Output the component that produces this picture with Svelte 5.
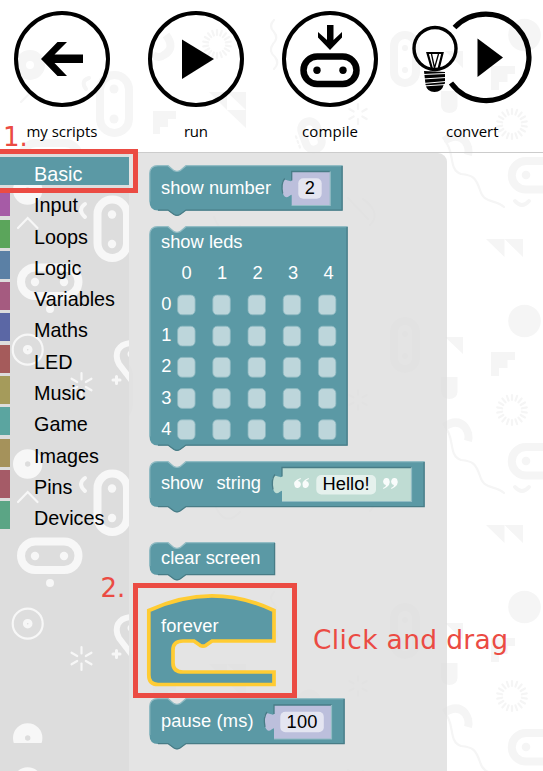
<script>
  const categories = [
    ['Basic', '#5b99a5'], ['Input', '#a65ba6'], ['Loops', '#5ba55b'], ['Logic', '#5b80a5'],
    ['Variables', '#a55b80'], ['Maths', '#5b67a5'], ['LED', '#a55b5b'], ['Music', '#a59b5b'],
    ['Game', '#5ba5a0'], ['Images', '#a5925b'], ['Pins', '#a55b67'], ['Devices', '#5ba585']
  ];

  // Outline of a statement block with a notch above and a tab below.
  const block = (w, h) =>
    `M.5 9Q.5 .5 9 .5H19L25 5.5Q28 7 31 5.5L37 .5H${w}V${h}H37L31 ${h + 4.3}Q28 ${h + 6} 25 ${h + 4.3}L19 ${h}H9Q.5 ${h} .5 ${h - 9}Z`;
  const light = (w, h) => `M.7 ${h - 9}V9Q.7 .7 9 .7H19L25 5.7Q28 7.2 31 5.7L37 .7H${w}`;
  const dark = (w, h) => `M${w - .4} 1V${h - .4}H37L31 ${h + 4}Q28 ${h + 5.7} 25 ${h + 4}L19 ${h - .4}H9`;

  // Outline of a value block, whose puzzle tab sits left of x.
  const value = (x, y, w, h) =>
    `M${x} ${y}H${x + w}V${y + h}H${x}V${y + 24}C${x} ${y + 21} ${x - 4} ${y + 28} ${x - 7} ${y + 25}Q${x - 10} ${y + 22} ${x - 9.7} ${y + 14}C${x - 9.5} ${y + 3} ${x - 2} ${y + 12} ${x} ${y + 9}Z`;

  const rays = (n) => Array.from({ length: n }, (_, i) => (i * 360) / n);
  const five = [0, 1, 2, 3, 4];
</script>

{#snippet frame(w, h)}
  <path class="fill" d={block(w, h)} />
  <path class="light" d={light(w, h)} />
  <path class="dark" d={dark(w, h)} />
{/snippet}

{#snippet socket(x, y, w, h, color)}
  <path d={value(x, y, w, h)} fill={color} />
  <path class="dark" d="M{x} {y + 9}V{y}H{x + w}" />
  <path class="rim" d="M{x} {y + h}H{x + w}V{y}" />
  <path class="dark" d="M{x - 7} {y + 7}Q{x - 11} {y + 12} {x - 9} {y + 22}" />
{/snippet}

{#snippet backdrop()}
  <g id="tile">
    <path class="line wide" d="M560 161H526A14 14 0 0 0 526 189.500H560" />
    <circle cx="526" cy="175" r="4.300" />
    <path class="line" d="M515 201Q522 209 529 201" />
    <path class="line thin" d="M445 141C455 151 448 170 461 174C473 175 476 178 480 190C484 204 495 199 504 207" />
    <path d="M486 239H504.500V257ZM504.500 239H523V257ZM445 337H463V354ZM491 352H515V360H507.500V368H499V376H491Z" />
    <circle cx="524.500" cy="321" r="16.300" />
    <path d="M441 377H457.500V392Q457 399 449 399Q441 398 441 391Z" />
    <path class="line wide" d="M444 427Q457 418 465 427Q470 434 468 441" />
    {#each rays(18) as r}
      <path class="line thin" d="M512 395V400" transform="rotate({r} 512 410)" />
    {/each}
    <rect class="line wide" x="394" y="321" width="22" height="48" rx="11" />
    <circle cx="405" cy="334" r="3" /><circle cx="405" cy="356" r="3" />
    {#each rays(6) as r}
      <path class="line thin" d="M358 390V395" transform="rotate({r} 358 400)" />
    {/each}
    <g transform="rotate(-20 311 420)">
      <rect class="line wide" x="303" y="407" width="16" height="29" rx="8" />
      <path class="line thin" d="M296 417V430" stroke-dasharray="2 3" />
    </g>
    <path class="line thin" d="M274 306Q268 312 274 318Q279 324 273 330Q268 337 275 343Q280 349 274 355" />
    <path class="line wide" d="M166 321Q176 334 164 341Q159 345 153 341" />
    {#each rays(18) as r}
      <path class="line thin" d="M217 316V321" transform="rotate({r} 217 330)" />
    {/each}
    <path fill-rule="evenodd" d="M15 351A15 15 0 1 0 45 351A15 15 0 1 0 15 351M26 351A4 4 0 1 1 34 351A4 4 0 1 1 26 351" />
    <path class="line thin" d="M21 388L28 381" />
    <path class="line" d="M89 364Q80 367 86 375" />
    <rect class="line wide" x="100" y="361" width="29" height="58" rx="14.500" />
    <circle cx="114" cy="375" r="4.500" /><circle cx="114" cy="405" r="4.500" />
    <path d="M153 397H176V405H168V413H160V420H153ZM209 378H246V414L227 396H246L227 378V396Z" />
    <rect class="line wide" x="22" y="429" width="57" height="28" rx="14" />
    <path class="line thin" d="M214 503Q224 529 240 512M348 484L368 505M363 485Q382 499 370 511" />
  </g>
{/snippet}

<div class="page">
  <svg class="backdrop" width="543" height="771" viewBox="0 0 543 771">
    {@render backdrop()}
    <use href="#tile" y="-286" />
    <use href="#tile" y="286" />
    <use href="#tile" y="572" />
  </svg>

  <header>
    <svg width="124" height="152" viewBox="0 0 124 152">
      <circle class="ring" cx="62" cy="59" r="46" />
      <path d="M41 59L57.500 42H67L54.500 54.500H83V63H54.500L67 76H57.500Z" />
      <text x="26.500" y="136.500" textLength="71">my scripts</text>
    </svg>
    <svg width="144" height="152" viewBox="124 0 144 152">
      <circle class="ring" cx="196" cy="59" r="46" />
      <path d="M182 39.500L214 59L182 79Z" />
      <text x="184" y="136.500" textLength="24">run</text>
    </svg>
    <svg width="124" height="152" viewBox="268 0 124 152">
      <circle class="ring" cx="330" cy="59" r="46" />
      <path d="M327 25H333.500V40L342 32V37.500L330 50L318 37.500V32L327 40Z" />
      <rect class="bit" x="303.500" y="56.500" width="53" height="27.500" rx="13.750" />
      <circle cx="317" cy="70.300" r="3.700" /><circle cx="343" cy="70.300" r="3.700" />
      <text x="302" y="136.500" textLength="56">compile</text>
    </svg>
    <svg width="151" height="152" viewBox="392 0 151 152">
      <path class="arc" d="M454.500 27.500A43.200 43.200 0 1 1 451 83" />
      <path d="M477.500 38.500L503 57.500L477.500 77Z" />
      <circle class="bulb" cx="435" cy="48.500" r="21" />
      <path class="filament" d="M432 69L427.500 53H442.500L438.500 69" />
      <path class="filament slim" d="M431.500 54L434.500 68L438.500 54" />
      <path d="M424 71L445 72V83.500L444 84Q442 92 434.500 92Q427 92 425.500 84.500Z" />
      <path class="thread" d="M423 74.500L446 73.500M423 79L446 77.500M423 83.500L446 81.500M423 86L446 84.500" />
      <text x="446" y="136.500" textLength="52.500">convert</text>
    </svg>
  </header>

  <main>
    <nav>
      <svg class="doodles" width="129" height="618" viewBox="0 153 129 618">
        <clipPath id="upper"><rect x="0" y="153" width="129" height="590" /></clipPath>
        <clipPath id="lower"><rect x="0" y="743" width="129" height="28" /></clipPath>
        {#each [-274, 0, 274, 548, 592] as dy}
          <g clip-path={dy === 592 ? 'url(#lower)' : 'url(#upper)'}>
            <g transform="translate(0 {dy})">
              <path fill-rule="evenodd" d="M13 190A14.700 14.700 0 1 0 42.400 190A14.700 14.700 0 1 0 13 190M25 190A2.700 2.700 0 1 1 30.400 190A2.700 2.700 0 1 1 25 190" />
              <path class="line thin" d="M18 228L27.700 218L37.500 228" />
              <path class="line" d="M85 204Q77 210 85 217" />
              <rect class="line wide" x="97.500" y="199.500" width="29.500" height="58.500" rx="14.750" />
              <circle cx="112" cy="214.500" r="4.200" /><circle cx="112" cy="244" r="4.200" />
              <rect class="line wide" x="21" y="267.500" width="57.500" height="28.500" rx="14.250" />
              <circle cx="35" cy="282" r="4.200" /><circle cx="64" cy="282" r="4.200" />
              <circle cx="50" cy="309" r="4" />
              <circle class="line thin" cx="27.700" cy="349.700" r="15" />
              <circle class="line" cx="27.700" cy="349.700" r="2.800" />
              {#each rays(6) as r}
                <path class="line thin" d="M81.500 373V379.500" transform="rotate({r} 81.500 384.500)" />
              {/each}
              <path class="line pin" d="M132 343Q122 343 118 350Q115 357 119 364L132 381" />
              <circle cx="131" cy="354" r="3.500" />
              <path class="line plus" d="M116.500 376.500V383.500M113 380H120" />
            </g>
          </g>
        {/each}
      </svg>
      <ul>
        {#each categories as [name, color], i}
          <li class:active={i === 0} style="border-left-color: {color}">{name}</li>
        {/each}
      </ul>
    </nav>

    <section>
      <svg class="block" width="200" height="61" viewBox="0 0 200 61">
        {@render frame(193.500, 45.500)}
        <text x="12" y="28.500" textLength="110">show number</text>
        {@render socket(142.700, 6.500, 38.500, 34, '#bcbfdc')}
        <rect class="pill" x="149.300" y="13.300" width="23.400" height="20.500" rx="5" />
        <text class="ink" x="155.800" y="29">2</text>
      </svg>

      <svg class="block" width="205" height="235" viewBox="0 0 205 235">
        {@render frame(198.500, 219.500)}
        <text x="12" y="22" textLength="81.500">show leds</text>
        {#each five as c}
          <text x={32.500 + c * 35.500} y="53">{c}</text>
          <text x="12.300" y={84 + c * 31.200}>{c}</text>
          {#each five as r}
            <rect class="led" x={28.600 + c * 35.200} y={69 + r * 31.200} width="17.500" height="19.800" rx="4.500" />
          {/each}
        {/each}
      </svg>

      <svg class="block" width="280" height="81" viewBox="0 0 280 81">
        {@render frame(275.500, 46)}
        <text x="12" y="28" textLength="42">show</text>
        <text x="67.500" y="28" textLength="44.500">string</text>
        {@render socket(133, 6.500, 129.500, 34, '#bfdcd3')}
        <path class="quote" d="M151.500 17Q142.500 20 146 26A3.500 3.500 0 1 0 149 20Q149 19 152 18ZM159.500 17Q151.500 20 154 26A3.500 3.500 0 1 0 157 20Q157 19 160 18Z" />
        <rect class="pill" x="167.300" y="14" width="59.700" height="19.500" rx="5" />
        <text class="ink" x="173.500" y="29" textLength="47">Hello!</text>
        <path class="quote" d="M234.500 28Q243 24 240 18A3.500 3.500 0 1 0 237 24Q237 26 234 27ZM242.500 28Q251 24 248 18A3.500 3.500 0 1 0 245 24Q245 26 242 27Z" />
      </svg>

      <svg class="block" width="130" height="51" viewBox="0 0 130 51">
        {@render frame(126, 33)}
        <text x="12" y="22" textLength="99.500">clear screen</text>
      </svg>

      <svg class="block" width="130" height="105" viewBox="0 0 130 105">
        <path class="hat" d="M-.2 17.500C42 -2 84 -2 125 17.500V48H63L57 52.300Q54 54 51 52.300L45 48H34Q24 48 24 57V70Q24 79 34 79H125V91.500H9Q-.2 91.500 -.2 82Z" />
        <text x="12" y="38.500" textLength="57.500">forever</text>
      </svg>

      <svg class="block" width="200" height="60" viewBox="0 0 200 60">
        {@render frame(195.500, 46)}
        <text x="12" y="29" textLength="92.500">pause (ms)</text>
        {@render socket(125, 7, 57.500, 34, '#bcbfdc')}
        <rect class="pill" x="131.300" y="13.700" width="43.500" height="20.500" rx="5" />
        <text class="ink" x="137.500" y="30" textLength="31">100</text>
      </svg>
    </section>
  </main>

  <div class="mark box-one"></div>
  <div class="mark box-two"></div>
  <span class="note one">1.</span>
  <span class="note two">2.</span>
  <svg class="drag" width="210" height="40" viewBox="0 0 210 40">
    <text x="2" y="29" textLength="195">Click and drag</text>
  </svg>
</div>

<style>
  .page {
    position: relative;
    width: 543px;
    height: 771px;
    overflow: hidden;
    background: #fff;
    font-family: "Liberation Sans", sans-serif;
  }
  svg { display: block; }
  .backdrop { position: absolute; inset: 0; fill: #f5f5f5; stroke: none; }
  .line { fill: none; stroke: #f5f5f5; stroke-width: 4; stroke-linecap: round; }
  .wide { stroke-width: 8; stroke-linecap: butt; }
  .thin { stroke-width: 2.2; }
  .pin { stroke-width: 6; }
  .plus { stroke-width: 3; }
  header {
    position: relative;
    display: flex;
    height: 152px;
    border-bottom: 1px solid #ccc;
  }
  header text { font: 15px "Open Sans", "Noto Sans", sans-serif; }
  .ring { fill: none; stroke: #000; stroke-width: 4; }
  .bit { fill: none; stroke: #000; stroke-width: 6.5; }
  .arc { fill: none; stroke: #000; stroke-width: 5.2; }
  .bulb { fill: none; stroke: #000; stroke-width: 3.4; }
  .filament { fill: none; stroke: #000; stroke-width: 2.2; }
  .slim { stroke-width: 1.3; }
  .thread { fill: none; stroke: #fff; stroke-width: 1; }
  main { position: relative; display: flex; height: 618px; }
  nav { position: relative; width: 129px; background: #ddd; overflow: hidden; }
  .doodles { position: absolute; inset: 0; fill: #f7f7f7; }
  .doodles .line { stroke: #f7f7f7; }
  ul {
    position: relative;
    display: flex;
    flex-direction: column;
    gap: 3.300px;
    margin: 0;
    padding: 4px 0 0;
    list-style: none;
  }
  li {
    box-sizing: border-box;
    height: 28px;
    padding-left: 24px;
    border-left: 10px solid;
    font-size: 19.800px;
    line-height: 34px;
    color: #000;
  }
  .active { background: #5b99a5; color: #fff; }
  section {
    width: 318px;
    height: 618px;
    box-sizing: border-box;
    padding: 11.500px 0 0 20px;
    border-top-right-radius: 9px;
    background: rgb(221 221 221 / 80%);
  }
  .block { overflow: visible; }
  .block text { font-size: 18.300px; fill: #fff; }
  .block .ink { fill: #000; }
  .fill { fill: #5b99a5; }
  .light { fill: none; stroke: #92bcc4; stroke-width: 1.3; }
  .dark { fill: none; stroke: #487c86; stroke-width: 1.3; }
  .rim { fill: none; stroke: #92bcc4; stroke-width: 1.2; }
  .pill { fill: #fff; fill-opacity: .6; }
  .led { fill: #bdd6db; stroke: #8cb8c0; stroke-width: .8; }
  .quote { fill: #fff; fill-opacity: .9; }
  .hat { fill: #5b99a5; stroke: #fc3; stroke-width: 3.7; }
  .mark { position: absolute; box-sizing: border-box; border: 5px solid #eb4b43; }
  .box-one { left: -5px; top: 149px; width: 143px; height: 44px; }
  .box-two { left: 133px; top: 583px; width: 164px; height: 115px; }
  .note {
    position: absolute;
    font: 26px/30px "DejaVu Sans", sans-serif;
    color: #eb4b43;
  }
  .one { left: 3px; top: 122px; }
  .two { left: 100.500px; top: 573px; }
  .drag { position: absolute; left: 311px; top: 620px; }
  .drag text { font: 26.500px "DejaVu Sans", sans-serif; fill: #eb4b43; }
</style>
